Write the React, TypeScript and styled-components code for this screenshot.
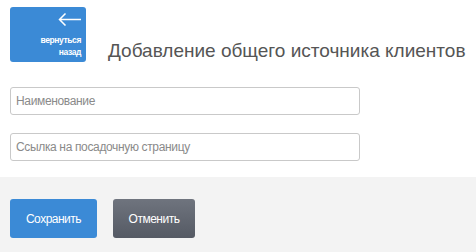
import React from "react";
import styled, { createGlobalStyle } from "styled-components";

const Global = createGlobalStyle`
  html, body { margin: 0; padding: 0; background: #fff; }
  body { font-family: "Liberation Sans", Arial, sans-serif; }
  * { box-sizing: border-box; }
`;

const Page = styled.div`
  display: flex;
  flex-direction: column;
  min-height: 252px;
`;

const Header = styled.div`
  display: flex;
  align-items: flex-end;
  padding: 7px 10px 0;
`;

const BackButton = styled.button`
  width: 76px;
  height: 55px;
  border: none;
  border-radius: 3px;
  background: #3b8ad6;
  color: #fff;
  display: flex;
  flex-direction: column;
  align-items: flex-end;
  padding: 6px 5px 0 0;
  font-family: "Liberation Sans", Arial, sans-serif;
  font-size: 8.5px;
  font-weight: bold;
  letter-spacing: -0.4px;
  line-height: 12px;
  text-align: right;
  cursor: pointer;
`;

const Arrow = styled.svg`
  width: 23px;
  height: 13px;
  margin-bottom: 8px;
`;

const Title = styled.h1`
  margin: 0 0 0 22px;
  font-size: 19px;
  font-weight: normal;
  line-height: 22px;
  color: #555;
`;

const Form = styled.div`
  display: flex;
  flex-direction: column;
  gap: 18px;
  padding: 25px 10px 16px;
`;

const Input = styled.input`
  width: 350px;
  height: 28px;
  border: 1px solid #c9c9c9;
  border-radius: 3px;
  padding: 0 5px;
  font-family: "Liberation Sans", Arial, sans-serif;
  font-size: 12px;
  letter-spacing: -0.35px;
  color: #333;
  outline: none;
  &::placeholder { color: #8a8a8a; }
`;

const Footer = styled.div`
  flex: 1;
  background: #f3f3f3;
  display: flex;
  gap: 16px;
  padding: 22px 10px;
`;

const ActionButton = styled.button<{ $variant: "primary" | "secondary" }>`
  height: 39px;
  width: ${(p) => (p.$variant === "primary" ? "87px" : "82px")};
  border: none;
  border-radius: 3px;
  color: #fff;
  font-family: "Liberation Sans", Arial, sans-serif;
  font-size: 12px;
  letter-spacing: -0.5px;
  cursor: pointer;
  background: ${(p) =>
    p.$variant === "primary"
      ? "#3b8ad6"
      : "linear-gradient(#6f747e, #555a64)"};
`;

export default function App() {
  return (
    <>
      <Global />
      <Page>
        <Header>
          <BackButton>
            <Arrow viewBox="0 0 23 13" fill="none" stroke="#fff" strokeWidth="1.5">
              <path d="M23 6.5H1.5M7.5 0.5l-6 6 6 6" />
            </Arrow>
            <span>вернуться</span>
            <span>назад</span>
          </BackButton>
          <Title>Добавление общего источника клиентов</Title>
        </Header>
        <Form>
          <Input placeholder="Наименование" />
          <Input placeholder="Ссылка на посадочную страницу" />
        </Form>
        <Footer>
          <ActionButton $variant="primary">Сохранить</ActionButton>
          <ActionButton $variant="secondary">Отменить</ActionButton>
        </Footer>
      </Page>
    </>
  );
}
